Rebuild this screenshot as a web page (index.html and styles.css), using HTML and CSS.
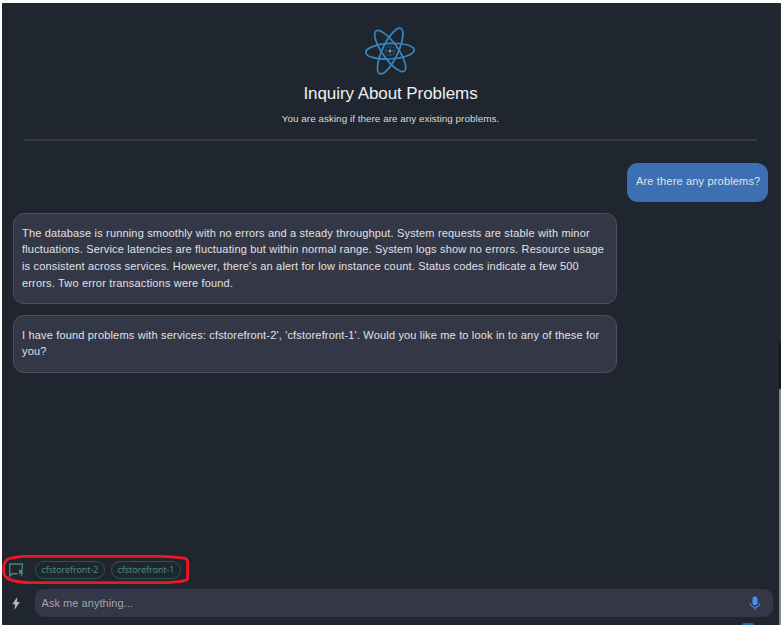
FILE: index.html
```html
<!DOCTYPE html>
<html lang="en">
<head>
<meta charset="utf-8">
<title>Inquiry About Problems</title>
<link rel="stylesheet" href="styles.css">
</head>
<body>
<div class="window">
  <main class="chat">
    <header class="intro">
      <svg class="atom" viewBox="0 0 50 50" fill="none" stroke="#3488bd" stroke-width="1.7">
        <ellipse cx="25" cy="25.2" rx="24.2" ry="7.8" transform="rotate(-3 25 25.2)"/>
        <ellipse cx="25.2" cy="25" rx="24.6" ry="7.8" transform="rotate(55 25.2 25)"/>
        <ellipse cx="25.2" cy="25" rx="25" ry="7.8" transform="rotate(-65 25.2 25)"/>
        <circle cx="25" cy="25" r="4.8" stroke="#28658c" stroke-width="1.1" stroke-dasharray="1.5 1"/>
        <path d="M25 21v8M21 25h8" stroke="#28658c" stroke-width="1"/>
        <circle cx="25" cy="25" r="1.3" fill="#48b4ee" stroke="none"/>
      </svg>
      <h1>Inquiry About Problems</h1>
      <p>You are asking if there are any existing problems.</p>
    </header>
    <section class="messages">
      <div class="bubble user">Are there any problems?</div>
      <div class="bubble reply">The database is running smoothly with no errors and a steady throughput. System requests are stable with minor<br>fluctuations. Service latencies are fluctuating but within normal range. System logs show no errors. Resource usage<br>is consistent across services. However, there's an alert for low instance count. Status codes indicate a few 500<br>errors. Two error transactions were found.</div>
      <div class="bubble reply">I have found problems with services: cfstorefront-2', 'cfstorefront-1'. Would you like me to look in to any of these for<br>you?</div>
    </section>
    <footer class="composer">
      <div class="suggestions">
        <svg class="chat-icon" viewBox="0 0 16 16" fill="none" stroke="#49866f" stroke-width="1.4">
          <path d="M9.6 11.8H4L1.7 14V2h12.6v5.6"/>
          <path d="M11 7.8h4l-.9 2.6h1.3l-2.6 5v-3.7H11z" fill="#49866f" stroke="none"/>
        </svg>
        <span class="chip">cfstorefront-2</span>
        <span class="chip">cfstorefront-1</span>
        <svg class="outline" viewBox="0 0 187 31" fill="none" stroke="#f01721" stroke-width="2.8">
          <path d="M21 2.3H158C172 2.3 178 3.6 182 4.2Q185.6 5 185.6 8V24C185.6 27 181 27 176 27.7L166 28.7H34C20 28.7 10 27.5 5 24C2 22 1.4 18 1.6 14C1.8 8 4 5 9 4Z"/>
        </svg>
      </div>
      <div class="entry">
        <svg class="bolt" viewBox="0 0 8 13"><path d="M5.2 0L.3 7.2h2.8l-.7 5.8L7.8 5H4.9z" fill="#b9bbbd"/></svg>
        <div class="field">
          <span>Ask me anything...</span>
          <svg class="mic" viewBox="0 0 12 15" fill="none" stroke="#4580d0" stroke-width="1.4">
            <rect x="3.5" y=".5" width="5" height="8.6" rx="2.2" fill="#4a90f2" stroke="none"/>
            <path d="M1.2 7.2a4.8 4 0 0 0 9.6 0M6 11.3v2.7"/>
          </svg>
        </div>
      </div>
      <div class="peek"></div>
    </footer>
  </main>
</div>
</body>
</html>
```
FILE: styles.css
```css
* { box-sizing: border-box; }
body { margin: 0; background: #fff; font-family: "Liberation Sans", Arial, sans-serif; color: #e1e2e5; }
.window {
  width: 782px; height: 625px; padding: 3px 1px 0 2px; overflow: hidden;
  background: linear-gradient(#fdfefc, #fdfefc) 0 0 / 100% 3px no-repeat,
    linear-gradient(#fdfefc, #fdfefc) 0 0 / 2px 100% no-repeat,
    linear-gradient(#282b2d 0 340px, #15181d 345px 388px, #858789 390px) 779px 0 / 2px 100% no-repeat, #fff;
}
.chat { width: 777px; height: 622px; background: #20262f; display: flex; flex-direction: column; }
.intro { height: 138px; margin: 0 22px; padding-top: 23px; border-bottom: 2px solid #373b44; display: flex; flex-direction: column; align-items: center; }
.atom { width: 50px; height: 50px; overflow: visible; margin-right: 1px; }
h1 { margin: 8px 0 0; font-size: 17px; line-height: 20px; font-weight: 400; letter-spacing: -.07px; color: #eeeff1; white-space: nowrap; }
.intro p { margin: 9px 0 0; font-size: 9.9px; line-height: 12px; letter-spacing: .03px; white-space: nowrap; color: #d8dadd; }
.messages { flex: 1; padding: 22px 11px 0 10.5px; display: flex; flex-direction: column; }
.bubble { font-size: 11px; line-height: 16.7px; letter-spacing: .17px; white-space: nowrap; border-radius: 11px; }
.user { align-self: flex-end; width: 141px; height: 39px; padding: 10px 9px; background: #3c70b2; margin-bottom: 11px; }
.reply { width: 604px; height: 91px; padding: 10.6px 8.5px; background: #333746; border: 1px solid #4d4f5c; margin-bottom: 11px; }
.reply:last-child { height: 58px; margin: 0; }
.composer { height: 71px; position: relative; }
.suggestions { position: relative; height: 31px; padding-left: 6px; display: flex; align-items: center; gap: 6px; }
.chat-icon { width: 16px; height: 16px; margin-right: 5px; }
.chip { width: 70px; height: 18px; border: 1px solid #28544f; border-radius: 9px; color: #4a8b76; font: 9px/15px "Noto Sans", sans-serif; letter-spacing: -.08px; text-align: center; white-space: nowrap; }
.outline { position: absolute; left: 0; top: 0; width: 187px; height: 31px; }
.entry { display: flex; align-items: center; height: 28px; margin-top: 4px; padding-left: 9.5px; }
.bolt { width: 8px; height: 13px; }
.field { width: 738px; height: 28px; margin-left: 15px; padding: 0 12px 0 7px; border-radius: 9px; background: #333746; display: flex; align-items: center; justify-content: space-between; font-size: 11px; letter-spacing: .05px; color: #a2a5ae; }
.mic { width: 12px; height: 15px; }
.peek { position: absolute; left: 740px; top: 69px; width: 12px; height: 2px; border-radius: 6px 6px 0 0; background: #176da5; }
```
